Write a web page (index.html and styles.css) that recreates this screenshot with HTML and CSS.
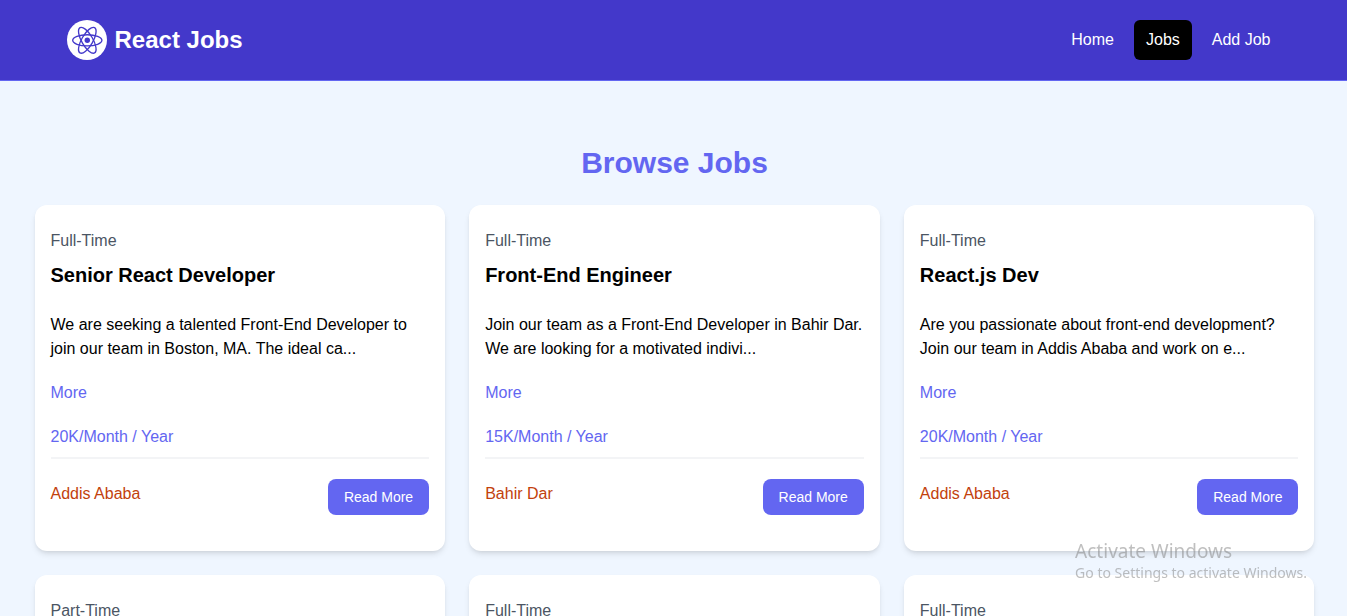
FILE: index.html
```html
<!DOCTYPE html>
<html lang="en">
<head>
  <meta charset="utf-8">
  <meta name="viewport" content="width=device-width, initial-scale=1">
  <title>React Jobs</title>
  <link rel="stylesheet" href="styles.css">
</head>
<body>
  <header class="navbar">
    <div class="container navbar-inner">
      <a class="brand" href="#">
        <svg class="brand-logo" viewBox="0 0 40 40" aria-hidden="true">
          <circle cx="20" cy="20" r="20" fill="#fff"/>
          <g fill="none" stroke="#4338ca" stroke-width="1.35">
            <ellipse cx="20.3" cy="20.3" rx="14.6" ry="5.6"/>
            <ellipse cx="20.3" cy="20.3" rx="14.6" ry="5.6" transform="rotate(60 20.3 20.3)"/>
            <ellipse cx="20.3" cy="20.3" rx="14.6" ry="5.6" transform="rotate(120 20.3 20.3)"/>
          </g>
          <circle cx="20.3" cy="20.3" r="2.7" fill="#4338ca"/>
        </svg>
        <span>React Jobs</span>
      </a>
      <nav class="nav-links">
        <a class="nav-link" href="#">Home</a>
        <a class="nav-link nav-link-active" href="#" aria-current="page">Jobs</a>
        <a class="nav-link" href="#">Add Job</a>
      </nav>
    </div>
  </header>

  <main class="jobs">
    <div class="container jobs-inner">
      <h1 class="jobs-title">Browse Jobs</h1>
      <div class="job-grid">
        <article class="job-card">
          <p class="job-type">Full-Time</p>
          <h2 class="job-name">Senior React Developer</h2>
          <p class="job-text">We are seeking a talented Front-End Developer to join our team in Boston, MA. The ideal ca...</p>
          <button class="more" type="button">More</button>
          <p class="salary">20K/Month / Year</p>
          <div class="job-footer">
            <p class="location">Addis Ababa</p>
            <a class="read-more" href="#">Read More</a>
          </div>
        </article>
        <article class="job-card">
          <p class="job-type">Full-Time</p>
          <h2 class="job-name">Front-End Engineer</h2>
          <p class="job-text">Join our team as a Front-End Developer in Bahir Dar. We are looking for a motivated indivi...</p>
          <button class="more" type="button">More</button>
          <p class="salary">15K/Month / Year</p>
          <div class="job-footer">
            <p class="location">Bahir Dar</p>
            <a class="read-more" href="#">Read More</a>
          </div>
        </article>
        <article class="job-card">
          <p class="job-type">Full-Time</p>
          <h2 class="job-name">React.js Dev</h2>
          <p class="job-text">Are you passionate about front-end development? Join our team in Addis Ababa and work on e...</p>
          <button class="more" type="button">More</button>
          <p class="salary">20K/Month / Year</p>
          <div class="job-footer">
            <p class="location">Addis Ababa</p>
            <a class="read-more" href="#">Read More</a>
          </div>
        </article>
        <article class="job-card">
          <p class="job-type">Part-Time</p>
        </article>
        <article class="job-card">
          <p class="job-type">Full-Time</p>
        </article>
        <article class="job-card">
          <p class="job-type">Full-Time</p>
        </article>
      </div>
    </div>
  </main>

  <aside class="watermark">
    <p class="watermark-title">Activate Windows</p>
    <p class="watermark-text">Go to Settings to activate Windows.</p>
  </aside>
</body>
</html>
```
FILE: styles.css
```css
* {
  box-sizing: border-box;
}

body {
  margin: 0;
  height: 100vh;
  overflow: hidden;
  background: #eff6ff;
  color: #000;
  font-family: "Liberation Sans", Arial, sans-serif;
  font-size: 16px;
  line-height: 24px;
}

h1,
h2,
p {
  margin: 0;
}

a {
  color: inherit;
  text-decoration: none;
}

.container {
  max-width: 1280px;
  margin: 0 auto;
}

.navbar {
  padding-left: 2px;
  background: #4338ca;
  border-bottom: 1px solid #6366f1;
  color: #fff;
}

.navbar-inner {
  display: flex;
  align-items: center;
  justify-content: space-between;
  height: 80px;
  padding: 0 32px;
}

.brand {
  display: flex;
  align-items: center;
  gap: 8px;
  font-size: 24px;
  font-weight: 700;
  line-height: 32px;
}

.brand-logo {
  width: 40px;
  height: 40px;
}

.nav-links {
  display: flex;
  gap: 8px;
}

.nav-link {
  padding: 8px 12px;
  border-radius: 6px;
}

.nav-link-active {
  background: #000;
}

.jobs {
  padding: 64px 0 40px 2px;
}

.jobs-title {
  margin-bottom: 24px;
  color: #6366f1;
  font-size: 30px;
  font-weight: 700;
  line-height: 36px;
  text-align: center;
}

.job-grid {
  display: grid;
  grid-template-columns: repeat(3, 1fr);
  gap: 24px;
}

.job-card {
  display: flex;
  flex-direction: column;
  padding: 24px 16px 36px;
  background: #fff;
  border-radius: 12px;
  box-shadow: 0 4px 6px -1px rgb(0 0 0 / 10%), 0 2px 4px -2px rgb(0 0 0 / 10%);
}

.job-type {
  color: #4b5563;
  margin-bottom: 8px;
}

.job-name {
  margin-bottom: 24px;
  font-size: 20px;
  font-weight: 700;
  line-height: 28px;
}

.job-text {
  margin-bottom: 20px;
}

.more {
  align-self: flex-start;
  margin-bottom: 20px;
  padding: 0;
  border: 0;
  background: none;
  color: #6366f1;
  font: inherit;
  cursor: pointer;
}

.salary {
  padding-bottom: 8px;
  border-bottom: 2px solid #f3f4f6;
  color: #6366f1;
}

.job-footer {
  display: flex;
  align-items: flex-start;
  justify-content: space-between;
  padding-top: 20px;
}

.location {
  padding-top: 3px;
  color: #c2410c;
}

.read-more {
  padding: 8px 16px;
  border-radius: 8px;
  background: #6366f1;
  color: #fff;
  font-size: 14px;
  line-height: 20px;
}

.watermark {
  position: fixed;
  right: 40px;
  bottom: 33px;
  color: rgb(128 128 128 / 50%);
  font-family: "Noto Sans", "Open Sans", sans-serif;
}

.watermark-title {
  font-size: 19px;
}

.watermark-text {
  font-size: 14px;
  line-height: 20px;
}
```
